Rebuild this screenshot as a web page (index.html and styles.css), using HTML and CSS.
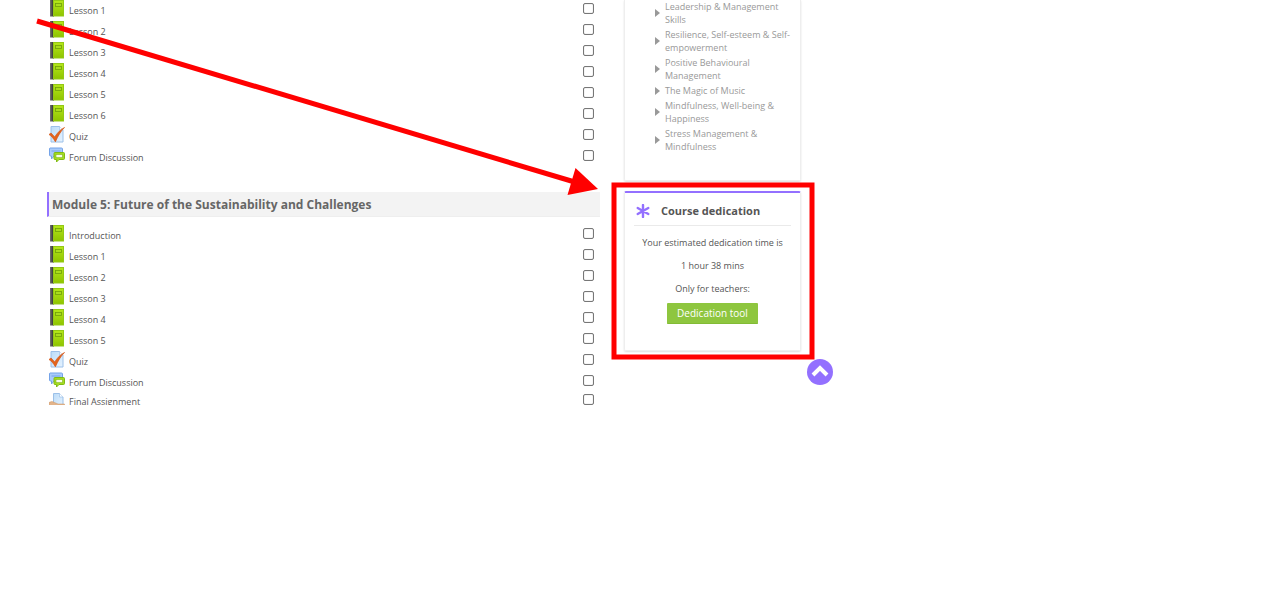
FILE: index.html
```
<!DOCTYPE html>
<html lang="en">
<head>
<meta charset="utf-8">
<meta name="viewport" content="width=device-width, initial-scale=1">
<title>Course</title>
<link rel="stylesheet" href="styles.css">
</head>
<body>
<svg class="defs" aria-hidden="true">
  <defs>
    <linearGradient id="cover" x1="0" y1="0" x2="0" y2="1"><stop offset="0" stop-color="#b4e61a"/><stop offset="1" stop-color="#8fc400"/></linearGradient>
    <linearGradient id="spine" x1="0" y1="0" x2="1" y2="0"><stop offset="0" stop-color="#777"/><stop offset="1" stop-color="#222"/></linearGradient>
    <linearGradient id="paper" x1="0" y1="0" x2="1" y2="1"><stop offset="0" stop-color="#bcdcf8"/><stop offset="1" stop-color="#e6f3ff"/></linearGradient>
  </defs>
  <symbol id="book" viewBox="0 0 16 17">
    <rect x="1" y="0" width="4" height="16.500" fill="url(#spine)"/>
    <rect x="4.500" y=".5" width="10" height="15.500" fill="url(#cover)" stroke="#93c814"/>
    <rect x="6.500" y="3.500" width="6" height="3" fill="#a9dc1c" stroke="#6f9f08" stroke-width=".8"/>
  </symbol>
  <symbol id="quiz" viewBox="0 0 16 17">
    <path d="M2 .5h8.500l3.500 3.500v12H2z" fill="url(#paper)" stroke="#9cc0e8"/>
    <path d="M10.500.5V4H14" fill="#fff" stroke="#9cc0e8" stroke-width=".7"/>
    <path d="M0 8.500 2 7l3.700 3.900C8.500 6.600 11.500 3.500 15.500 1.500 11.500 5.500 9 10 6.400 15.800 4.500 12.500 2.500 10 0 8.500z" fill="#e4641c" stroke="#d2581a" stroke-width=".7"/>
  </symbol>
  <symbol id="forum" viewBox="0 0 16 17">
    <path d="M1 1h11.500q1 0 1 1v6q0 1-1 1H5l-2.500 3V9H1.500q-1 0-1-1V2q0-1 .5-1z" fill="#a9cbfa" stroke="#74a3e8"/>
    <path d="M2.500 4h9" stroke="#74a3e8"/>
    <path d="M6 5.500h8.500q1 0 1 1v5q0 1-1 1H10L7.500 15v-2.500H6q-1 0-1-1v-5q0-1 1-1z" fill="#a5dc1e" stroke="#7fba14"/>
    <rect x="7" y="7.500" width="6.500" height="3.200" fill="#f7fce8" stroke="#7fba14" stroke-width=".6"/>
  </symbol>
  <symbol id="assign" viewBox="0 0 16 17">
    <path d="M4.500.5h6L14 4v10H4.500z" fill="url(#paper)" stroke="#9cc0e8"/>
    <path d="M10.500.5V4H14" fill="#fff" stroke="#9cc0e8" stroke-width=".7"/>
    <path d="M0 9.500Q3 7.500 5.500 9.500L9 11h6.500v2.500L9 17H0z" fill="#e3b48a" stroke="#c99467" stroke-width=".5"/>
  </symbol>
</svg>

<div class="page">
  <main class="course">
    <ul class="activities">
      <li class="activity"><svg class="icon"><use href="#book"/></svg><a href="#">Lesson 1</a><input type="checkbox" aria-label="Lesson 1 complete"></li>
      <li class="activity"><svg class="icon"><use href="#book"/></svg><a href="#">Lesson 2</a><input type="checkbox" aria-label="Lesson 2 complete"></li>
      <li class="activity"><svg class="icon"><use href="#book"/></svg><a href="#">Lesson 3</a><input type="checkbox" aria-label="Lesson 3 complete"></li>
      <li class="activity"><svg class="icon"><use href="#book"/></svg><a href="#">Lesson 4</a><input type="checkbox" aria-label="Lesson 4 complete"></li>
      <li class="activity"><svg class="icon"><use href="#book"/></svg><a href="#">Lesson 5</a><input type="checkbox" aria-label="Lesson 5 complete"></li>
      <li class="activity"><svg class="icon"><use href="#book"/></svg><a href="#">Lesson 6</a><input type="checkbox" aria-label="Lesson 6 complete"></li>
      <li class="activity"><svg class="icon"><use href="#quiz"/></svg><a href="#">Quiz</a><input type="checkbox" aria-label="Quiz complete"></li>
      <li class="activity"><svg class="icon"><use href="#forum"/></svg><a href="#">Forum Discussion</a><input type="checkbox" aria-label="Forum Discussion complete"></li>
    </ul>
    <h2 class="module-title">Module 5: Future of the Sustainability and Challenges</h2>
    <ul class="activities">
      <li class="activity"><svg class="icon"><use href="#book"/></svg><a href="#">Introduction</a><input type="checkbox" aria-label="Introduction complete"></li>
      <li class="activity"><svg class="icon"><use href="#book"/></svg><a href="#">Lesson 1</a><input type="checkbox" aria-label="Module 5 Lesson 1 complete"></li>
      <li class="activity"><svg class="icon"><use href="#book"/></svg><a href="#">Lesson 2</a><input type="checkbox" aria-label="Module 5 Lesson 2 complete"></li>
      <li class="activity"><svg class="icon"><use href="#book"/></svg><a href="#">Lesson 3</a><input type="checkbox" aria-label="Module 5 Lesson 3 complete"></li>
      <li class="activity"><svg class="icon"><use href="#book"/></svg><a href="#">Lesson 4</a><input type="checkbox" aria-label="Module 5 Lesson 4 complete"></li>
      <li class="activity"><svg class="icon"><use href="#book"/></svg><a href="#">Lesson 5</a><input type="checkbox" aria-label="Module 5 Lesson 5 complete"></li>
      <li class="activity"><svg class="icon"><use href="#quiz"/></svg><a href="#">Quiz</a><input type="checkbox" aria-label="Module 5 Quiz complete"></li>
      <li class="activity"><svg class="icon"><use href="#forum"/></svg><a href="#">Forum Discussion</a><input type="checkbox" aria-label="Module 5 Forum Discussion complete"></li>
      <li class="activity last"><svg class="icon"><use href="#assign"/></svg><a href="#">Final Assignment</a><input type="checkbox" aria-label="Final Assignment complete"></li>
    </ul>
  </main>

  <aside class="sidebar">
    <nav class="card courses">
      <ul>
        <li><a href="#">Leadership &amp; Management Skills</a></li>
        <li><a href="#">Resilience, Self-esteem &amp; Self-empowerment</a></li>
        <li><a href="#">Positive Behavioural Management</a></li>
        <li><a href="#">The Magic of Music</a></li>
        <li><a href="#">Mindfulness, Well-being &amp; Happiness</a></li>
        <li><a href="#">Stress Management &amp; Mindfulness</a></li>
      </ul>
    </nav>
    <section class="card dedication">
      <h3><svg class="star" viewBox="0 0 14 14" aria-hidden="true"><path d="M7 1v12M1.700 4l10.600 6M12.300 4 1.700 10"/></svg>Course dedication</h3>
      <p>Your estimated dedication time is</p>
      <p>1 hour 38 mins</p>
      <p>Only for teachers:</p>
      <button type="button">Dedication tool</button>
    </section>
  </aside>

  <button type="button" class="to-top" aria-label="Back to top"><svg viewBox="0 0 26 26"><path d="M6 16l7-7 7 7"/></svg></button>

  <svg class="annotation" width="840" height="405" viewBox="0 0 840 405" aria-hidden="true">
    <path class="line" d="M37 21 578 183"/>
    <path class="head" d="M598 189 575.500 168 567.500 195z"/>
    <rect class="line" x="614" y="185" width="198" height="172"/>
  </svg>
</div>
</body>
</html>
```
FILE: styles.css
```
* {
  box-sizing: border-box;
}

body {
  margin: 0;
  background: #fff;
  color: #555;
  font-family: "Open Sans", "Noto Sans", sans-serif;
  font-size: 9px;
}

ul {
  list-style: none;
  margin: 0;
  padding: 0;
}

a {
  color: inherit;
  text-decoration: none;
}

.defs {
  position: absolute;
  width: 0;
  height: 0;
}

.page {
  position: relative;
  display: grid;
  grid-template-columns: minmax(0, 1fr) 177px;
  column-gap: 24px;
  max-width: 840px;
  padding: 0 39px 0 47px;
}

.activity {
  display: flex;
  align-items: flex-start;
  height: 21px;
  padding: 0 6px 0 2px;
  line-height: 21px;
}

.activity a {
  flex: 1;
  margin-left: 4px;
}

.icon {
  width: 16px;
  height: 17px;
}

.activity input {
  appearance: none;
  width: 11px;
  height: 11px;
  margin: 3px 0 0;
  border: 1px solid #777;
  border-radius: 2px;
  background: #fff;
  box-shadow: inset 0 0 1px #999;
}

.activity.last {
  height: 12px;
  overflow: hidden;
  line-height: 17px;
}

.activity.last input {
  margin-top: 1px;
}

.module-title {
  margin: 24px 0 8px;
  padding: 2px 0 0 3px;
  border-left: 2px solid #9370ff;
  border-bottom: 1px solid #eee;
  background: #f3f3f3;
  color: #666;
  font-size: 12px;
  line-height: 22px;
}

.card {
  border: 1px solid #eee;
  border-radius: 2px;
  box-shadow: 0 1px 2px #ddd;
}

.courses {
  margin-bottom: 10px;
  padding: 0 9px 25px 30px;
  border-top: 0;
  border-radius: 0 0 2px 2px;
  color: #999;
  line-height: 13px;
}

.courses li {
  display: flex;
  align-items: center;
  gap: 5px;
  margin-bottom: 2px;
}

.courses li::before {
  content: "";
  border-left: 5px solid #999;
  border-top: 4px solid transparent;
  border-bottom: 4px solid transparent;
}

.dedication {
  padding: 0 9px 26px;
  border-top: 2px solid #9370ff;
  text-align: center;
}

.dedication h3 {
  display: flex;
  align-items: center;
  gap: 11px;
  margin: 0 0 10px;
  padding: 3px 0 0 2px;
  border-bottom: 1px solid #eaeaea;
  font-size: 11px;
  line-height: 29px;
}

.star {
  width: 14px;
  height: 14px;
  fill: none;
  stroke: #9370ff;
  stroke-width: 2.4;
  stroke-linecap: round;
}

.dedication p {
  margin: 0 0 10px;
  line-height: 13px;
}

.dedication button {
  height: 21px;
  margin-top: -2px;
  padding: 0 10px;
  border: 0;
  border-bottom: 1px solid #82bb35;
  border-radius: 1px;
  background: #8ec63f;
  color: #fff;
  font: inherit;
  font-size: 10px;
}

.to-top {
  position: absolute;
  right: 7px;
  bottom: 20px;
  width: 26px;
  height: 26px;
  padding: 0;
  border: 0;
  border-radius: 50%;
  background: #9370ff;
}

.to-top svg {
  display: block;
  fill: none;
  stroke: #fff;
  stroke-width: 4;
}

.annotation {
  position: absolute;
  top: 0;
  left: 0;
  pointer-events: none;
}

.line {
  fill: none;
  stroke: #f00;
  stroke-width: 5;
}

.head {
  fill: #f00;
}
```
